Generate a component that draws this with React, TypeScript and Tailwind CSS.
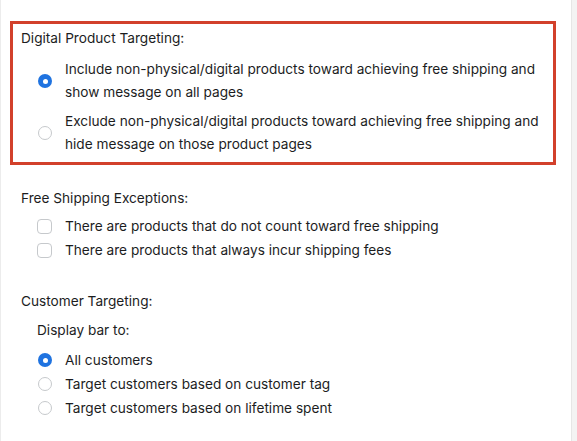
import React from "react";

function Radio({ checked }: { checked?: boolean }) {
  return checked ? (
    <span className="flex h-[14px] w-[14px] shrink-0 items-center justify-center rounded-full bg-[#1f73e0]">
      <span className="h-[5px] w-[5px] rounded-full bg-white" />
    </span>
  ) : (
    <span className="h-[14px] w-[14px] shrink-0 rounded-full border border-[#c6c9cc] bg-white" />
  );
}

function Checkbox() {
  return <span className="h-[15px] w-[15px] shrink-0 rounded-[4px] border border-[#c6c9cc] bg-white" />;
}

export default function App() {
  return (
    <div
      className="flex h-[441px] w-[577px] bg-white text-[13.65px] text-[#1c1d1e]"
      style={{ fontFamily: '"Inter", "Liberation Sans", sans-serif' }}
    >
      <div className="flex-1 border-l border-[#ececec] pl-[9px] pt-[21px]">
        <div className="w-[546px] border-[3px] border-[#d2402b] px-[8px] pb-[6px] pt-[4px]">
          <div className="leading-[20px]">Digital Product Targeting:</div>
          <div className="mt-[10px] flex flex-col gap-[6px]">
            <div className="flex items-center">
              <div className="flex w-[44px] shrink-0 justify-start pl-[17px]">
                <Radio checked />
              </div>
              <div className="leading-[23px]">
                Include non-physical/digital products toward achieving free shipping and show message on all pages
              </div>
            </div>
            <div className="flex items-center">
              <div className="flex w-[44px] shrink-0 justify-start pl-[17px]">
                <Radio />
              </div>
              <div className="leading-[23px]">
                Exclude non-physical/digital products toward achieving free shipping and hide message on those product pages
              </div>
            </div>
          </div>
        </div>

        <div className="pl-[11px]">
          <div className="mt-[23px] leading-[20px]">Free Shipping Exceptions:</div>
          <div className="mt-[6px] flex flex-col">
            <div className="flex items-center leading-[24px]">
              <div className="flex w-[44px] shrink-0 pl-[16px]">
                <Checkbox />
              </div>
              <span>There are products that do not count toward free shipping</span>
            </div>
            <div className="flex items-center leading-[24px]">
              <div className="flex w-[44px] shrink-0 pl-[16px]">
                <Checkbox />
              </div>
              <span>There are products that always incur shipping fees</span>
            </div>
          </div>

          <div className="mt-[29px] leading-[20px]">Customer Targeting:</div>
          <div className="mt-[9px] pl-[16px] leading-[20px]">Display bar to:</div>
          <div className="mt-[8px] flex flex-col">
            <div className="flex items-center leading-[24px]">
              <div className="flex w-[44px] shrink-0 pl-[17px]">
                <Radio checked />
              </div>
              <span>All customers</span>
            </div>
            <div className="flex items-center leading-[24px]">
              <div className="flex w-[44px] shrink-0 pl-[17px]">
                <Radio />
              </div>
              <span>Target customers based on customer tag</span>
            </div>
            <div className="flex items-center leading-[24px]">
              <div className="flex w-[44px] shrink-0 pl-[17px]">
                <Radio />
              </div>
              <span>Target customers based on lifetime spent</span>
            </div>
          </div>
        </div>
      </div>
      <div className="w-[6px] shrink-0 border-l border-[#e6e6e6] bg-[#f3f3f3]" />
    </div>
  );
}
